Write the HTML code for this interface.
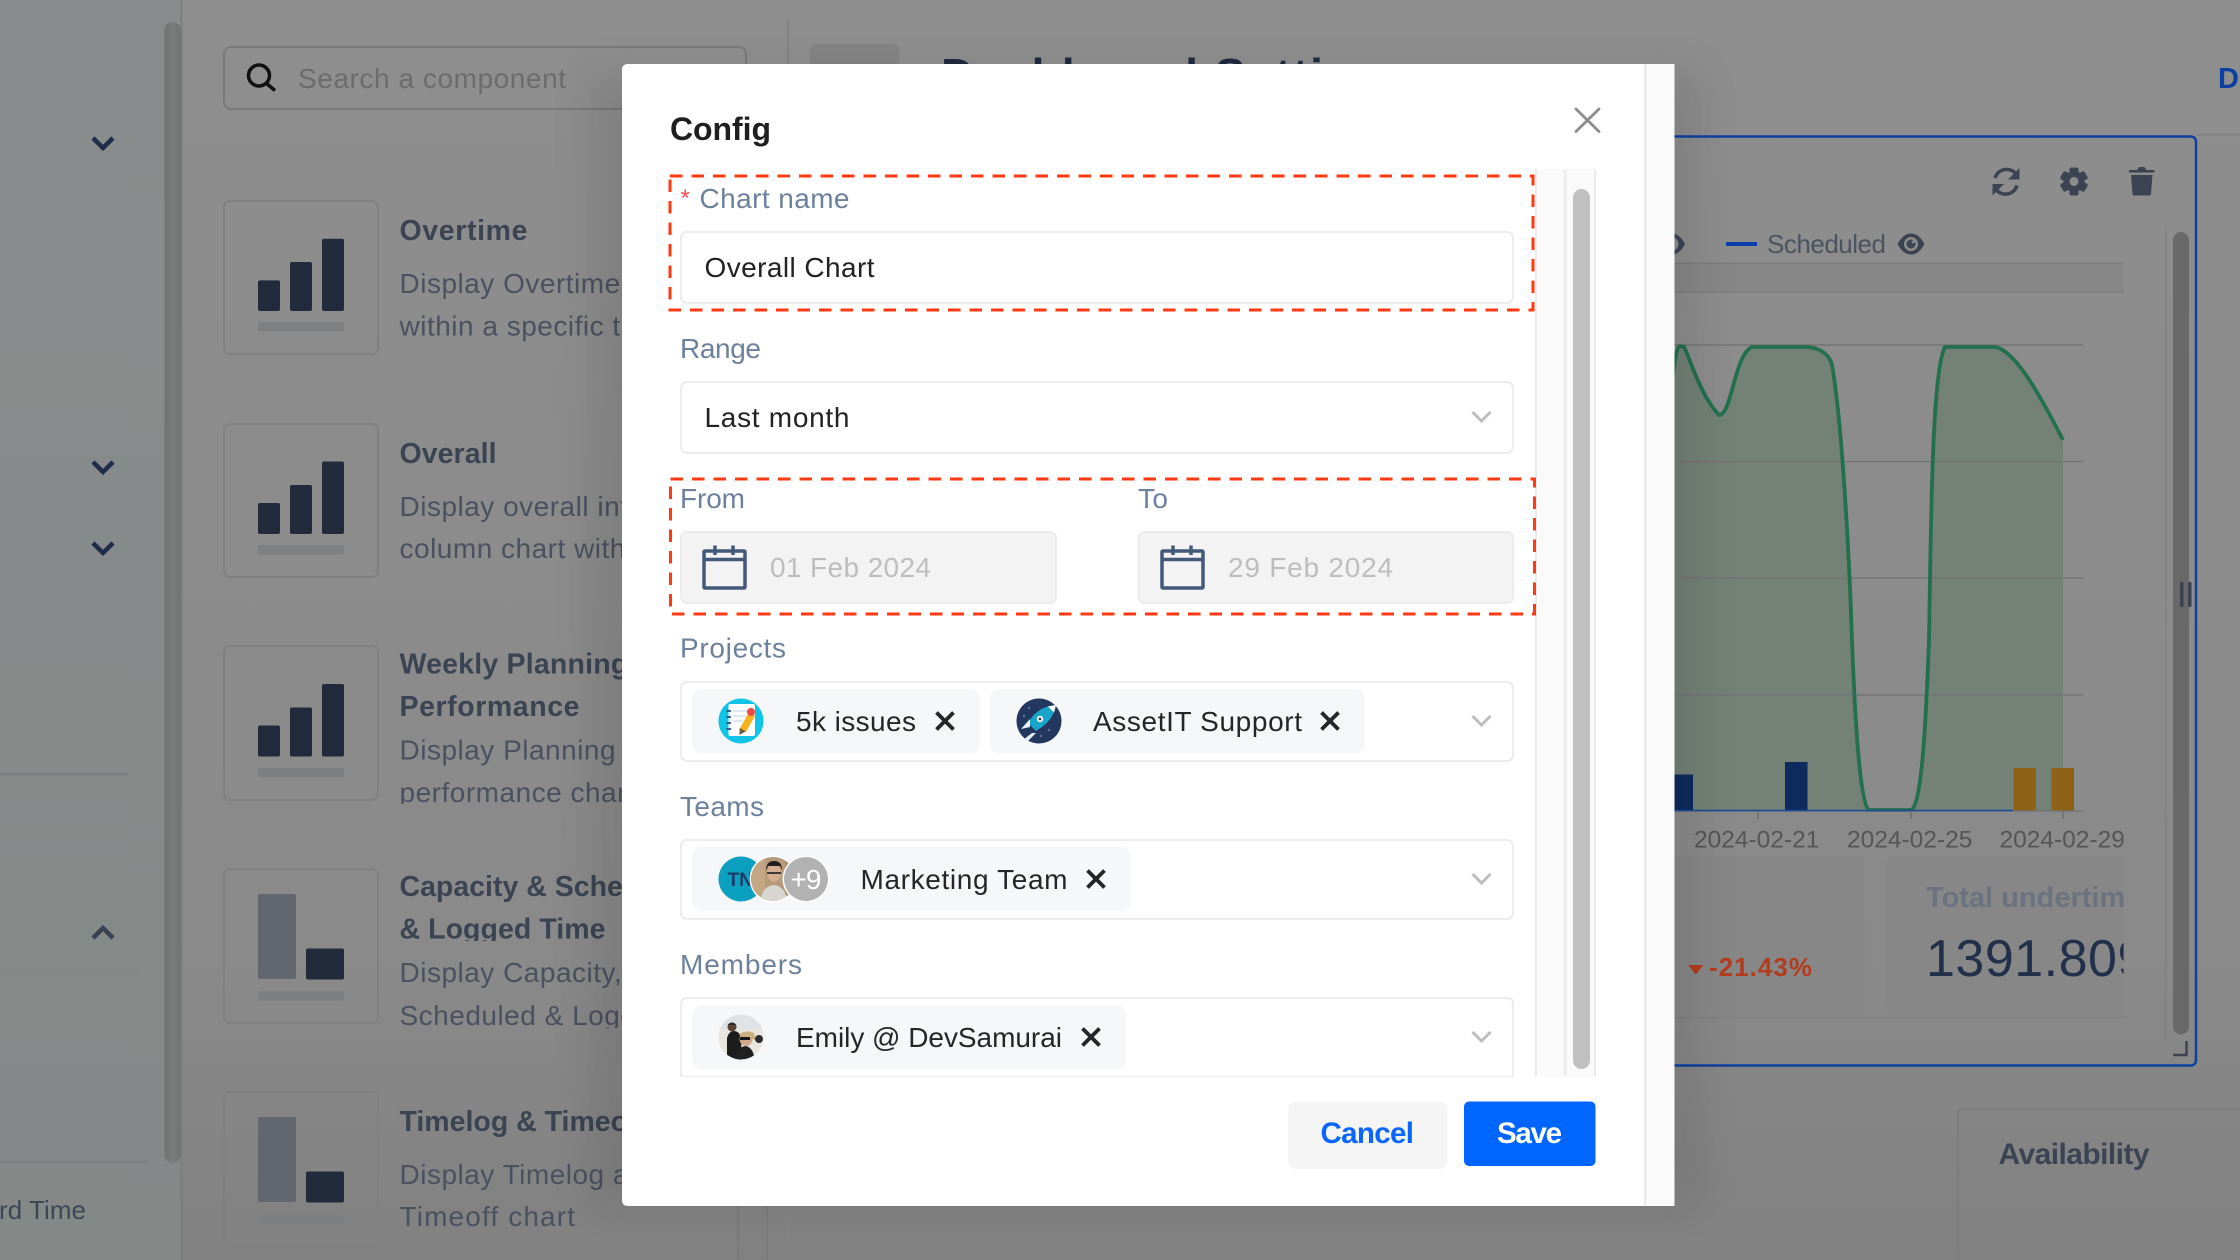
<!DOCTYPE html>
<html lang="en">
<head>
<meta charset="utf-8">
<title>Config</title>
<style>
html,body{margin:0;padding:0;width:2240px;height:1260px;overflow:hidden;background:#8c8c8c}
svg{display:block;font-family:"Liberation Sans",sans-serif}
</style>
</head>
<body>
<svg xmlns="http://www.w3.org/2000/svg" width="2240" height="1260" viewBox="0 0 2240 1260">
<defs>
<linearGradient id="pg" x1="0" y1="0" x2="0" y2="1"><stop offset="0" stop-color="#8e8e8e"/><stop offset=".75" stop-color="#8a8a8a"/><stop offset="1" stop-color="#818181"/></linearGradient>
<linearGradient id="sbg" x1="0" y1="0" x2="0" y2="1"><stop offset="0" stop-color="#888c8c"/><stop offset="1" stop-color="#848887"/></linearGradient>
<linearGradient id="sth" x1="0" y1="0" x2="1" y2="0"><stop offset="0" stop-color="#717373"/><stop offset=".5" stop-color="#7c7e7e"/><stop offset="1" stop-color="#717373"/></linearGradient>
<clipPath id="chart"><rect x="1600" y="150" width="523.6" height="910"/></clipPath>
<clipPath id="c3"><rect x="390" y="640" width="240" height="164"/></clipPath>
<clipPath id="c4a"><rect x="390" y="860" width="240" height="81"/></clipPath>
<clipPath id="c4b"><rect x="390" y="950" width="240" height="78"/></clipPath>
<clipPath id="avt1"><circle cx="773" cy="879" r="22"/></clipPath>
<clipPath id="avt2"><circle cx="741" cy="1037" r="22.5"/></clipPath>
<clipPath id="av0"><circle cx="741" cy="879" r="22.5"/></clipPath>
<filter id="shadow" x="-10%" y="-10%" width="120%" height="120%"><feGaussianBlur stdDeviation="22"/></filter>
</defs>

<!-- page background -->
<rect width="2240" height="1260" fill="url(#pg)"/>
<rect width="181" height="1260" fill="url(#sbg)"/>
<rect x="180.500" width="2" height="1260" fill="#7b7e7e"/>
<rect x="164.500" y="22" width="16" height="1141" rx="8" fill="url(#sth)"/>

<!-- sidebar -->
<g fill="none" stroke="#1f2d4a" stroke-width="4.500">
<polyline points="93,138 103,148 113,138"/>
<polyline points="93,462 103,472 113,462"/>
<polyline points="93,543 103,553 113,543"/>
</g>
<polyline points="93,938 103,928 113,938" fill="none" stroke="#384252" stroke-width="4.500"/>
<rect y="772" width="128" height="3.500" fill="#7e7f82"/>
<rect y="972.500" width="139" height="1.500" fill="#828585"/>
<rect y="1160.500" width="147" height="3" fill="#7e8080"/>
<text x="-1" y="1219" font-size="26" fill="#3f4757" textLength="87">rd Time</text>

<!-- search -->
<rect x="224" y="47" width="522" height="62" rx="7" fill="none" stroke="#7a7a7a" stroke-width="2"/>
<circle cx="259" cy="75.500" r="10.500" fill="none" stroke="#111" stroke-width="3.500"/>
<line x1="266.500" y1="83.500" x2="275" y2="90.500" stroke="#111" stroke-width="3.500"/>
<text x="298" y="88" font-size="28" fill="#6c6c6c" textLength="268">Search a component</text>

<!-- top main -->
<rect x="787" y="20" width="2" height="1240" fill="#838383"/>
<rect x="737" y="1190" width="2" height="70" fill="#7b7b7b"/>
<rect x="766" y="1190" width="2" height="70" fill="#7b7b7b"/>
<rect x="810" y="44" width="89" height="40" rx="6" fill="#848484"/>
<text x="941" y="91" font-size="46" font-weight="700" fill="#1f2a40" textLength="470">Dashboard Settings</text>
<text x="2218" y="88" font-size="29" font-weight="700" fill="#0b3fa3">Done</text>
<rect x="2196" y="134" width="44" height="1.500" fill="#7f7f7f"/>

<!-- thumbs -->
<g fill="none" stroke="#808080" stroke-width="2">
<rect x="224" y="201" width="154" height="153" rx="6"/>
<rect x="224" y="424" width="154" height="153" rx="6"/>
<rect x="224" y="646" width="154" height="154" rx="6"/>
<rect x="224" y="869" width="154" height="154" rx="6"/>
<rect x="224" y="1092" width="154" height="154" rx="6"/>
</g>
<g fill="#212b3b">
<rect x="258" y="280.400" width="22" height="30.600" rx="2"/><rect x="290" y="262" width="22" height="49" rx="2"/><rect x="322" y="238.800" width="22" height="72.200" rx="2"/>
<rect x="258" y="503" width="22" height="31" rx="2"/><rect x="290" y="485" width="22" height="49" rx="2"/><rect x="322" y="461.500" width="22" height="72.500" rx="2"/>
<rect x="258" y="725.500" width="22" height="31" rx="2"/><rect x="290" y="707.500" width="22" height="49" rx="2"/><rect x="322" y="684" width="22" height="72.500" rx="2"/>
<rect x="306" y="948.500" width="38" height="31" rx="2"/>
<rect x="306" y="1171.500" width="38" height="31" rx="2"/>
</g>
<g fill="#61666f">
<rect x="258" y="894" width="38" height="85" rx="2"/>
<rect x="258" y="1117" width="38" height="85" rx="2"/>
</g>
<g fill="#7e7f81">
<rect x="258" y="322" width="86" height="9.500" rx="2"/>
<rect x="258" y="545" width="86" height="9.500" rx="2"/>
<rect x="258" y="768" width="86" height="9.500" rx="2"/>
<rect x="258" y="991" width="86" height="9.500" rx="2"/>
<rect x="258" y="1214" width="86" height="9.500" rx="2"/>
</g>

<!-- item text -->
<g font-size="28.500" font-weight="700" fill="#3b4453">
<text x="399.500" y="240" textLength="128">Overtime</text>
<text x="399.500" y="463" textLength="97">Overall</text>
<text x="399.500" y="673.500" letter-spacing=".2">Weekly Planning</text>
<text x="399.500" y="716" textLength="180">Performance</text>
<text x="399.500" y="896">Capacity &amp; Scheduled</text>
<g clip-path="url(#c4a)"><text x="399.500" y="938.500" textLength="206">&amp; Logged Time</text></g>
<text x="399.500" y="1131">Timelog &amp; Timeoff</text>
</g>
<g font-size="28" fill="#4a5160" letter-spacing=".5">
<text x="399.500" y="293">Display Overtime</text>
<text x="399.500" y="335.500">within a specific time</text>
<text x="399.500" y="516">Display overall info</text>
<text x="399.500" y="558">column chart with</text>
<text x="399.500" y="759.500">Display Planning</text>
<g clip-path="url(#c3)"><text x="399.500" y="802">performance chart</text></g>
<text x="399.500" y="982">Display Capacity,</text>
<g clip-path="url(#c4b)"><text x="399.500" y="1025">Scheduled &amp; Logged</text></g>
<text x="399.500" y="1184">Display Timelog and</text>
<text x="399.500" y="1226" textLength="176">Timeoff chart</text>
</g>

<!-- chart frame -->
<rect x="1600" y="136.500" width="596" height="929" rx="5" fill="none" stroke="#0f40a0" stroke-width="2.500"/>

<!-- toolbar icons -->
<g fill="none" stroke="#3c4454" stroke-width="3.500">
<path d="M1995 178 a12 12 0 0 1 21 -4"/>
<path d="M2017 185.500 a12 12 0 0 1 -21 4"/>
</g>
<path d="M2019.500 168 v11.500 h-11.500z" fill="#3c4454"/>
<path d="M1992.500 195.500 v-11.500 h11.500z" fill="#3c4454"/>
<g fill="#3c4454">
<circle cx="2074" cy="181.500" r="10.500"/>
<g><rect x="2069.500" y="167.500" width="9" height="28" rx="2"/>
<rect x="2069.500" y="167.500" width="9" height="28" rx="2" transform="rotate(60 2074 181.500)"/>
<rect x="2069.500" y="167.500" width="9" height="28" rx="2" transform="rotate(120 2074 181.500)"/></g>
</g>
<circle cx="2074" cy="181.500" r="4.500" fill="#8b8b8b"/>
<g fill="#3c4454">
<path d="M2129 170 h8 l2 -3 h5.500 l2 3 h8 v2.500 h-25.500z"/>
<path d="M2131 175 h21.500 l-1.500 19 q-.2 1.500 -2 1.500 h-14.500 q-1.800 0 -2 -1.500z"/>
</g>

<!-- legend -->
<rect x="1726" y="242" width="31" height="4" fill="#0a3ea8"/>
<text x="1767" y="253" font-size="26" fill="#4c5360" textLength="119">Scheduled</text>
<path fill-rule="evenodd" d="M1897.500 244 C1902 236,1906 233.500,1911 233.500 C1916 233.500,1920 236,1924.500 244 C1920 252,1916 254.500,1911 254.500 C1906 254.500,1902 252,1897.500 244Z M1911 237 a7 7 0 1 0 .01 0Z" fill="#3c4454"/>
<circle cx="1911" cy="244" r="4.500" fill="#3c4454"/>
<circle cx="1913" cy="242" r="1.500" fill="#8b8b8b"/>
<path fill-rule="evenodd" d="M1658 244 C1662.500 236,1666.500 233.500,1671.500 233.500 C1676.500 233.500,1680.500 236,1685 244 C1680.500 252,1676.500 254.500,1671.500 254.500 C1666.500 254.500,1662.500 252,1658 244Z M1671.500 237 a7 7 0 1 0 .01 0Z" fill="#3c4454"/>
<rect x="1600" y="263" width="523.600" height="29" fill="#878787"/>
<rect x="1600" y="262.500" width="523.600" height="1.500" fill="#7e7e7e"/>
<rect x="1600" y="291.500" width="523.600" height="1.500" fill="#7e7e7e"/>

<!-- chart -->
<path d="M1672 380 C1675 360,1677 346,1680 346 L1684 347 C1690 358,1700 395,1719 415 C1732 415,1734 355,1752 347 L1808 347 C1820 348,1830 355,1832 365 C1840 410,1848 520,1852 640 C1855 720,1860 805,1869 810 L1911 810 C1922 805,1926 720,1929 640 C1931 520,1932 370,1945 347 L1995 347 C2015 350,2040 395,2063 440 L2063 811 L1672 811Z" fill="#738177"/>
<g stroke="#757575" stroke-width="1.500">
<line x1="1672" y1="345" x2="2083" y2="345"/>
<line x1="1672" y1="461.500" x2="2083" y2="461.500"/>
<line x1="1672" y1="578" x2="2083" y2="578"/>
<line x1="1672" y1="695" x2="2083" y2="695"/>
</g>
<path d="M1672 380 C1675 360,1677 346,1680 346 L1684 347 C1690 358,1700 395,1719 415 C1732 415,1734 355,1752 347 L1808 347 C1820 348,1830 355,1832 365 C1840 410,1848 520,1852 640 C1855 720,1860 805,1869 810 L1911 810 C1922 805,1926 720,1929 640 C1931 520,1932 370,1945 347 L1995 347 C2015 350,2040 395,2063 440" fill="none" stroke="#23704f" stroke-width="3.800"/>
<rect x="1672" y="774.500" width="21" height="37" fill="#0e2b5e"/>
<rect x="1785" y="762" width="22.500" height="49" fill="#0e2b5e"/>
<rect x="2013.500" y="768" width="22.500" height="43" fill="#8d6116"/>
<rect x="2051.500" y="768" width="22.500" height="43" fill="#8d6116"/>
<line x1="1672" y1="811" x2="2083" y2="811" stroke="#757575" stroke-width="1.500"/>
<line x1="1672" y1="810.500" x2="2013" y2="810.500" stroke="#1a4a9a" stroke-width="1.500"/>
<g stroke="#757575" stroke-width="2">
<line x1="1758" y1="811" x2="1758" y2="819"/>
<line x1="1911" y1="811" x2="1911" y2="819"/>
<line x1="2063" y1="811" x2="2063" y2="819"/>
</g>
<g clip-path="url(#chart)">
<g font-size="24.500" fill="#555">
<text x="1694" y="847.500">2024-02-21</text>
<text x="1847" y="847.500">2024-02-25</text>
<text x="1999.500" y="847.500">2024-02-29</text>
</g>
<rect x="1600" y="855.500" width="264.500" height="160" rx="6" fill="#878787"/>
<rect x="1885.500" y="855.500" width="260" height="160" rx="6" fill="#878787"/>
<text x="1926" y="907" font-size="29" font-weight="700" fill="#6b7280">Total undertime</text>
<text x="1926" y="976" font-size="52" fill="#22304a" letter-spacing=".5">1391.809</text>
<path d="M1688 965 h15.500 l-7.750 9.500z" fill="#b43c1e"/>
<text x="1709" y="976" font-size="26" font-weight="700" fill="#b43c1e" textLength="103">-21.43%</text>
<rect x="1600" y="1016.500" width="523.600" height="2" fill="#818181"/>
</g>

<!-- right scrollbar of chart -->
<rect x="2165" y="226.500" width="1.500" height="816" fill="#808080"/>
<rect x="2173" y="232" width="16" height="802.500" rx="8" fill="#696969"/>
<rect x="2180" y="582" width="3.500" height="25" rx="1" fill="#3c4250"/>
<rect x="2188" y="582" width="3.500" height="25" rx="1" fill="#3c4250"/>
<path d="M2173 1055 h13.500 v-14" fill="none" stroke="#3c4250" stroke-width="2.500"/>

<!-- availability -->
<path d="M1958 1260 V1114 q0 -5 5 -5 H2240" fill="none" stroke="#7d7d7d" stroke-width="2"/>
<text x="1998.500" y="1164" font-size="30" font-weight="700" fill="#3c4454" textLength="151">Availability</text>

<!-- modal shadow -->
<rect x="590" y="70" width="1110" height="1135" fill="#000" opacity=".09" filter="url(#shadow)"/>

<!-- modal -->
<path d="M628 64 H1674.500 V1206 H628 q-6 0 -6 -6 V70 q0 -6 6 -6z" fill="#fff"/>
<rect x="1646" y="64" width="28.500" height="1142" fill="#fafafa"/>
<rect x="1644" y="64" width="2.500" height="1142" fill="#ececec"/>

<text x="670" y="140" font-size="32" font-weight="700" fill="#1f1f1f" textLength="101">Config</text>
<g stroke="#8c8c8c" stroke-width="2.800" stroke-linecap="round">
<line x1="1576" y1="109" x2="1599" y2="131.500"/>
<line x1="1599" y1="109" x2="1576" y2="131.500"/>
</g>

<!-- scroll column -->
<rect x="1536" y="169" width="59" height="907.500" fill="#fafafa"/>
<rect x="1535" y="169" width="2" height="907.500" fill="#eaeaea"/>
<rect x="1563.500" y="169" width="3.500" height="907.500" fill="#eeeeee"/>
<rect x="1594" y="169" width="2" height="907.500" fill="#eaeaea"/>
<rect x="1573" y="189" width="17" height="880" rx="8.500" fill="#c0c0c0"/>

<!-- dashed -->
<g fill="none" stroke="#ff3a12" stroke-width="3">
<rect x="670" y="176" width="863" height="134" stroke-dasharray="12.500 9"/>
<rect x="670.500" y="479" width="864" height="135" stroke-dasharray="12.500 9"/>
</g>

<!-- fields -->
<g fill="#fff" stroke="#ececf1" stroke-width="2">
<rect x="681" y="232" width="832" height="71" rx="6"/>
<rect x="681" y="382" width="832" height="71" rx="6"/>
<rect x="681" y="682" width="832" height="79" rx="6"/>
<rect x="681" y="840" width="832" height="79" rx="6"/>
<path d="M681 1076.500 V1004 q0 -6 6 -6 H1507 q6 0 6 6 V1076.500" />
</g>
<line x1="681" y1="1076.500" x2="1513" y2="1076.500" stroke="#f0f0f3" stroke-width="1.500"/>
<g fill="#f3f3f4" stroke="#ececee" stroke-width="2">
<rect x="681" y="532" width="375" height="71" rx="6"/>
<rect x="1138.500" y="532" width="374.500" height="71" rx="6"/>
</g>

<!-- labels -->
<text x="680.500" y="206" font-size="24" fill="#ff4d4f">*</text>
<g font-size="28" fill="#6e819c">
<text x="699.500" y="208" textLength="150">Chart name</text>
<text x="680" y="358" textLength="81">Range</text>
<text x="680" y="508" textLength="65">From</text>
<text x="1138" y="508" textLength="30">To</text>
<text x="680" y="657.500" textLength="106">Projects</text>
<text x="680" y="816" textLength="84">Teams</text>
<text x="680" y="974" textLength="122">Members</text>
</g>

<!-- values -->
<g font-size="28" fill="#222">
<text x="704.500" y="277" textLength="170">Overall Chart</text>
<text x="704.500" y="427" textLength="145">Last month</text>
</g>
<g font-size="28" fill="#bdbdbd">
<text x="770" y="577" textLength="161">01 Feb 2024</text>
<text x="1228" y="577" textLength="165">29 Feb 2024</text>
</g>

<!-- calendars -->
<g fill="none" stroke="#44587a" stroke-width="3.500">
<rect x="704" y="551" width="41" height="37" rx="1"/>
<line x1="704" y1="559.500" x2="745" y2="559.500"/>
<line x1="715" y1="545.500" x2="715" y2="555"/>
<line x1="733" y1="545.500" x2="733" y2="555"/>
<rect x="1162" y="551" width="41" height="37" rx="1"/>
<line x1="1162" y1="559.500" x2="1203" y2="559.500"/>
<line x1="1173" y1="545.500" x2="1173" y2="555"/>
<line x1="1191" y1="545.500" x2="1191" y2="555"/>
</g>

<!-- chevrons -->
<g fill="none" stroke="#bdbdbd" stroke-width="3">
<polyline points="1472.500,412 1481.500,421 1490.500,412"/>
<polyline points="1472.500,716 1481.500,725 1490.500,716"/>
<polyline points="1472.500,874 1481.500,883 1490.500,874"/>
<polyline points="1472.500,1032 1481.500,1041 1490.500,1032"/>
</g>

<!-- chips -->
<g fill="#f6f7f9">
<rect x="692.500" y="689" width="287.500" height="64.500" rx="9"/>
<rect x="990" y="689" width="375" height="64.500" rx="9"/>
<rect x="692.500" y="847" width="438.500" height="64.500" rx="9"/>
<rect x="692.500" y="1005" width="433.500" height="64.500" rx="9"/>
</g>
<g font-size="28" fill="#262626">
<text x="796" y="731" textLength="120">5k issues</text>
<text x="1093" y="731" textLength="209">AssetIT Support</text>
<text x="860.500" y="889" textLength="207">Marketing Team</text>
<text x="796" y="1047" textLength="266">Emily @ DevSamurai</text>
</g>
<g stroke="#262626" stroke-width="3.800">
<path d="M936.500 712.500 l17 17 M953.500 712.500 l-17 17"/>
<path d="M1321.500 712.500 l17 17 M1338.500 712.500 l-17 17"/>
<path d="M1087.500 870.500 l17 17 M1104.500 870.500 l-17 17"/>
<path d="M1082.500 1028.500 l17 17 M1099.500 1028.500 l-17 17"/>
</g>

<!-- notebook avatar -->
<circle cx="741" cy="721" r="22.500" fill="#10c4e8"/>
<rect x="728.500" y="704" width="26.500" height="32" rx="2" fill="#fff"/>
<g stroke="#cfe0ee" stroke-width="1.500"><line x1="733" y1="711" x2="748" y2="711"/><line x1="733" y1="716" x2="746" y2="716"/><line x1="733" y1="721" x2="743" y2="721"/></g>
<g stroke="#2f4b7c" stroke-width="1.800"><line x1="726.500" y1="711" x2="731" y2="711"/><line x1="726.500" y1="717" x2="731" y2="717"/><line x1="726.500" y1="723" x2="731" y2="723"/><line x1="726.500" y1="729" x2="731" y2="729"/></g>
<line x1="752" y1="714" x2="743" y2="730" stroke="#f9b21d" stroke-width="7"/>
<path d="M739.800 728 l6 3.400 l-6.500 3.600z" fill="#6d5a40"/>
<circle cx="751" cy="712" r="4" fill="#ee4a45"/>

<!-- rocket avatar -->
<circle cx="1039" cy="721" r="22.500" fill="#24375f"/>
<circle cx="1029" cy="708" r="1.200" fill="#5c7099"/><circle cx="1049" cy="730" r="1.200" fill="#5c7099"/><circle cx="1041" cy="736" r="1.200" fill="#5c7099"/><circle cx="1024" cy="716" r="1.200" fill="#5c7099"/>
<path d="M1056 705 q-15 1 -24 12 l-4 6 l8 8 l6 -4 q12 -9 14 -22z" fill="#19a5c9"/>
<path d="M1056 705 l-8 1.500 l6 6z" fill="#fff"/>
<circle cx="1040" cy="719" r="3.200" fill="#fff"/><circle cx="1040" cy="719" r="1.400" fill="#24375f"/>
<path d="M1030 719 l-9 10 l9 -2z M1036 733 l-8 8 l-5 -1 l9 -7z" fill="#e8f2f6"/>

<!-- team avatars -->
<circle cx="741" cy="879" r="22.500" fill="#0b9fc0"/>
<g clip-path="url(#av0)"><text x="727.500" y="886" font-size="19" font-weight="700" fill="#1b3a66">TN</text></g>
<circle cx="773" cy="879" r="23.500" fill="#fff"/>
<circle cx="773" cy="879" r="22" fill="#b69a79"/>
<g clip-path="url(#avt1)">
<rect x="751" y="857" width="14" height="44" fill="#c3a684"/>
<rect x="785" y="857" width="12" height="44" fill="#a98d6c"/>
<path d="M760 902 q2 -16 14 -17 q11 1 14 17z" fill="#d8d6d0"/>
<ellipse cx="774" cy="873" rx="7" ry="8.500" fill="#d6ae92"/>
<path d="M766 871 q0 -10 8 -10 q8 0 8 9 l-2 -4 h-12z" fill="#23201e"/>
<line x1="767" y1="873" x2="781" y2="873" stroke="#2a2a2a" stroke-width="1.800"/>
</g>
<circle cx="806" cy="879" r="23.500" fill="#fff"/>
<circle cx="806" cy="879" r="22" fill="#b2b2b2"/>
<text x="790.500" y="889" font-size="28" fill="#fff" textLength="31">+9</text>

<!-- emily avatar -->
<circle cx="741" cy="1037" r="22.500" fill="#e9e6df"/>
<g clip-path="url(#avt2)">
<rect x="718" y="1015" width="46" height="14" fill="#dfe3e6"/>
<path d="M727 1062 v-24 q2 -7 7 -7 q5 0 7 6 l1 25z" fill="#1c1c1c"/>
<circle cx="732" cy="1027" r="4.500" fill="#5d4334"/>
<path d="M727.500 1025 q4.500 -5 9 0z" fill="#2a2a2a"/>
<path d="M733 1062 q3 -15 13 -16 q8 2 9 16z" fill="#202020"/>
<ellipse cx="746" cy="1039" rx="6.500" ry="7" fill="#cfa78a"/>
<path d="M739 1035 q6 -6 15 -2 l2 8 q-5 -4 -17 -6z" fill="#c9b07e"/>
<rect x="740" y="1037" width="10" height="3" fill="#151515"/>
<circle cx="759" cy="1039" r="4" fill="#2c2c2c"/>
</g>

<!-- buttons -->
<rect x="1288" y="1101.500" width="159.500" height="67.500" rx="8" fill="#f5f5f6"/>
<rect x="1464" y="1101.500" width="131.500" height="64.500" rx="5" fill="#0066ff"/>
<text x="1320.500" y="1143" font-size="29.500" font-weight="700" fill="#0a66ff" textLength="93.500">Cancel</text>
<text x="1497" y="1143" font-size="29.500" font-weight="700" fill="#fff" textLength="65">Save</text>
</svg>
</body>
</html>
